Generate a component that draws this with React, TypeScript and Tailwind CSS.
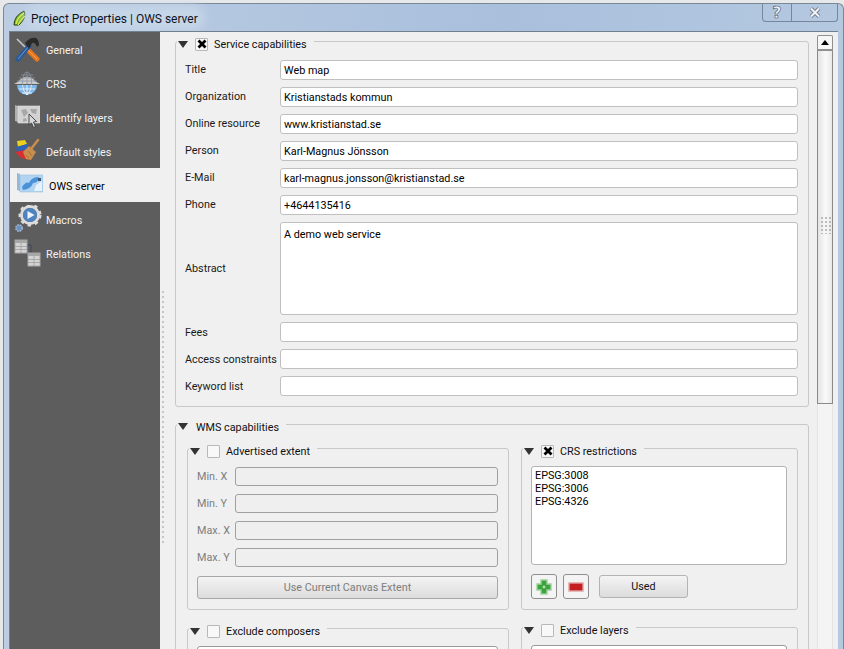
import React from "react";

const font = { fontFamily: 'Roboto, "Noto Sans", sans-serif' };

function Hammer() {
  return (
    <svg width="26" height="26" viewBox="0 0 26 26">
      <path d="M3 3 L13 13" stroke="#c4c8cc" strokeWidth="1.6" />
      <path d="M13 13 L23 23" stroke="#e8761a" strokeWidth="5" strokeLinecap="round" />
      <path d="M13 13 L23 23" stroke="#f4a060" strokeWidth="1" />
      <path d="M4 23 L15 10" stroke="#2a5a98" strokeWidth="5" strokeLinecap="round" />
      <path d="M4 23 L15 10" stroke="#6a98d0" strokeWidth="1" />
      <path d="M11 7 Q16 1 22 2 Q25 4 25 9 L23 11 Q21 6 18 7 L15 13 Z" fill="#2a2a2a" />
    </svg>
  );
}
function Globe() {
  return (
    <svg width="26" height="26" viewBox="0 0 26 26">
      <path d="M0 14 Q4 12 5 11 A9.5 9 0 0 1 21 11 Q22 12 26 14 Z" fill="#c8cacc" />
      <path d="M3 15 A10 10 0 0 0 23 15 Z" fill="#7db8ec" />
      <g stroke="#8a949e" strokeWidth="0.8" fill="none">
        <ellipse cx="13" cy="12" rx="4.5" ry="10" />
        <path d="M13 2 V14 M7 5 H19 M5 8 H21 M3 11 H23" />
      </g>
      <g stroke="#eaf4fc" strokeWidth="0.9" fill="none">
        <path d="M13 15 V25 M5 19 H21 M8 23 H18" />
        <path d="M8.5 15 Q9 21 13 25 Q17 21 17.5 15" />
      </g>
    </svg>
  );
}
function IdMap() {
  return (
    <svg width="26" height="26" viewBox="0 0 26 26">
      <path d="M1 1 L4 2 V18 L1 17 Z" fill="#b0b0b0" />
      <rect x="4" y="2" width="22" height="17" fill="#d2d2d2" stroke="#e0e0e0" strokeWidth="0.6" />
      <path d="M7 6 L12 5 L14 9 L10 13 Z M16 5 L23 5 L22 10 L18 9 Z M9 15 L12 14 L13 17 L9 18 Z" fill="#a8a8a8" />
      <path d="M15 10 L15 21 L17.5 19 L19.5 23.5 L21.5 22.5 L19.5 18 L22.5 17.5 Z" fill="#d8d8d8" stroke="#3c3c3c" strokeWidth="0.9" />
    </svg>
  );
}
function Brush() {
  return (
    <svg width="26" height="26" viewBox="0 0 26 26">
      <path d="M3 3 L11 2 L13 6 L4 9 Z" fill="#ecd020" />
      <path d="M2 9 L13 6 L13 12 L3 14 Z" fill="#2f62b4" />
      <path d="M1 14 L11 12 L16 22 L7 20 Z" fill="#d83030" />
      <path d="M9 14 L15 8 L22 14 L17 22 L12 21 Z" fill="#c98d4e" />
      <path d="M12 17 L15 20 M14 13 L18 18" stroke="#a06a30" strokeWidth="0.8" />
      <path d="M17 11 L24 2" stroke="#c98d4e" strokeWidth="2.5" strokeLinecap="round" />
    </svg>
  );
}
function OwsMap() {
  return (
    <svg width="26" height="26" viewBox="0 0 26 26">
      <path d="M0 1 L3 2 V19 L0 18 Z" fill="#94b8d8" />
      <rect x="3" y="3" width="23" height="17" fill="#b0d4f2" stroke="#9cc0dc" strokeWidth="0.6" />
      <path d="M5 15 Q9 9 12 11 Q14 6 20 5 L23 6 Q20 11 16 11 Q14 17 6 18 Z" fill="#4a92d8" />
      <path d="M19 13 L25 9 V19 H17 Z" fill="#e8f0f8" />
      <rect x="21" y="6" width="3" height="3" fill="#3a5a7c" />
    </svg>
  );
}
function Gear() {
  return (
    <svg width="28" height="28" viewBox="0 0 28 28">
      <g transform="translate(16 10)">
        <circle r="8.5" fill="none" stroke="#dcdcdc" strokeWidth="3" />
        <circle r="10" fill="none" stroke="#dcdcdc" strokeWidth="3" strokeDasharray="3.4 3.9" />
        <circle r="7" fill="#4d84c0" />
        <path d="M-2.5 -4 L4.5 0 L-2.5 4 Z" fill="#eef4fa" />
      </g>
      <circle cx="5" cy="23" r="3.2" fill="#6b92bf" stroke="#9fb6cf" strokeWidth="1.6" strokeDasharray="1.6 1" />
    </svg>
  );
}
function Tables() {
  const t = (x: number, y: number) => (
    <g>
      <rect x={x} y={y} width="12" height="13" fill="#d4d4d4" stroke="#a8a8a8" />
      <rect x={x} y={y} width="12" height="3" fill="#a8a8a8" />
      <path d={`M${x} ${y + 6.5} H${x + 12} M${x} ${y + 9.5} H${x + 12} M${x + 6} ${y + 3} V${y + 13}`} stroke="#a0a0a0" strokeWidth="0.8" />
    </g>
  );
  return (
    <svg width="28" height="28" viewBox="0 0 28 28">
      <path d="M13 6 H17 V14" fill="none" stroke="#3c4a5c" />
      {t(1, 1)}
      {t(14, 14)}
    </svg>
  );
}
function Tri() {
  return (
    <svg width="10" height="7" viewBox="0 0 10 7" className="shrink-0">
      <path d="M0 0 H10 L5 7 Z" fill="#333" />
    </svg>
  );
}
function Check({ on }: { on?: boolean }) {
  return (
    <span className="ml-[7px] mr-[6px] w-[13px] h-[13px] shrink-0 flex items-center justify-center border border-[#b8b8b8] bg-[#f8f8f8] rounded-[1px]">
      {on && (
        <svg width="10" height="10" viewBox="0 0 10 10">
          <path d="M1.5 1.5 L8.5 8.5 M8.5 1.5 L1.5 8.5" stroke="#000" strokeWidth="2.8" />
        </svg>
      )}
    </span>
  );
}

function Field({ label, value, tall, low }: { label: string; value?: string; tall?: boolean; low?: boolean }) {
  return (
    <div className="flex items-center mb-[7px]">
      <span className={`w-[95px] shrink-0 text-[#1a1a1a] whitespace-nowrap ${low ? "pt-[2px]" : ""}`}>{label}</span>
      <div className={`w-[518px] bg-white border border-[#c0c0c0] rounded-[3px] px-[3px] flex text-black ${tall ? "h-[93px] items-start pt-[7px]" : "h-5 items-center pt-[2px]"}`}>
        {value}
      </div>
    </div>
  );
}
function Disabled({ label }: { label: string }) {
  return (
    <div className="flex items-center mb-[8px]">
      <span className="w-[38px] shrink-0 text-[#7d7d7d] pt-[1px]">{label}</span>
      <div className="w-[263px] h-[19px] bg-[#efefef] border border-[#a0a0a0] rounded-[3px]" />
    </div>
  );
}
function Head({ on, check = true, text }: { on?: boolean; check?: boolean; text: string }) {
  return (
    <div className="flex items-center h-[14px] -mt-[5px] pl-[1px]">
      <span className="flex items-center bg-[#f0f0f0] pl-px pr-[7px]">
        <Tri />
        {check ? <Check on={on} /> : <span className="w-[8px]" />}
        <span className="pt-[2px]">{text}</span>
      </span>
    </div>
  );
}

const nav: [string, React.ReactNode][] = [
  ["General", <Hammer />],
  ["CRS", <Globe />],
  ["Identify layers", <IdMap />],
  ["Default styles", <Brush />],
  ["OWS server", <OwsMap />],
  ["Macros", <Gear />],
  ["Relations", <Tables />],
];

export default function App() {
  return (
    <div style={font} className="w-[844px] h-[649px] overflow-hidden bg-[#e6e8ea] text-[10.8px] leading-none text-[#111] pl-[3px] pt-[3px]">
      <div className="w-[841px] h-[646px] rounded-t-[6px] border border-[#7a8794] border-b-0 bg-[linear-gradient(90deg,#bccde3,#a9bfdc_60%,#b4c8e0)] flex flex-col">
        <div className="h-[27px] shrink-0 flex items-start pl-[8px]">
          <div className="flex items-center h-[26px] pt-[1px] gap-[3px]">
            <svg width="16" height="16" viewBox="0 0 16 16">
              <path d="M2 15 Q2 6 12 1 Q15 8 7 15 Z" fill="#7ab832" stroke="#24400c" strokeWidth="1" />
              <path d="M4 14 Q5 8 12 3 M6 15 Q8 10 13 6" stroke="#e4ee48" strokeWidth="1.2" fill="none" />
            </svg>
            <span className="text-[12px] pt-[2px] text-[#10131c] bg-[#c6d6e9] shadow-[0_0_10px_6px_#c6d6e9] rounded-[6px]">Project Properties | OWS server</span>
          </div>
          <div className="ml-auto mr-[5px] flex h-[18px] border border-t-0 border-[#76879c] rounded-b-[4px]">
            <div className="w-[29px] flex items-center justify-center border-r border-[#76879c] text-[#f2f5f9] font-bold text-[16px]" style={{ fontFamily: '"DejaVu Sans", sans-serif', WebkitTextStroke: "0.6px #4a5568" }}>?</div>
            <div className="w-[45px] flex items-center justify-center">
              <svg width="12" height="11" viewBox="0 0 12 11">
                <path d="M2 1.5 L10 9.5 M10 1.5 L2 9.5" stroke="#55606e" strokeWidth="3.6" />
                <path d="M2 1.5 L10 9.5 M10 1.5 L2 9.5" stroke="#f2f4f7" strokeWidth="2.2" />
              </svg>
            </div>
          </div>
        </div>
        <div className="flex-1 min-h-0 flex ml-[5px] mr-[5px] border-l border-t border-[#70808f] bg-[#f0f0f0]">
          <aside className="w-[150px] shrink-0 bg-[#5d5d5d]">
            {nav.map(([n, ic]) => {
              const sel = n === "OWS server";
              return (
                <div key={n} className={`h-[34px] flex items-center ${sel ? "bg-[#f0f0f0] text-black pl-[7px]" : "text-[#f2f2f2] pl-[4px]"}`}>
                  <span className="w-[32px] shrink-0 flex items-center justify-start">{ic}</span>
                  <span className="pt-[4px]">{n}</span>
                </div>
              );
            })}
          </aside>
          <div className="flex-1 min-w-0 flex">
            <div className="w-[15px] shrink-0 pl-[2px] pt-[259px]">
              <div className="w-[2px] h-[254px] bg-[linear-gradient(#c6c6c6_2px,transparent_2px)] bg-[length:2px_5px]" />
            </div>
            <main className="w-[642px] shrink-0 overflow-hidden pt-[9px]">
              <section className="w-[634px] h-[366px] border border-[#c8c8c8] rounded-[3px]">
                <Head on text="Service capabilities" />
                <div className="pl-[9px] pt-[9px]">
                  <Field label="Title" value="Web map" />
                  <Field label="Organization" value="Kristianstads kommun" />
                  <Field label="Online resource" value="www.kristianstad.se" />
                  <Field label="Person" value="Karl-Magnus Jönsson" />
                  <Field label="E-Mail" value="karl-magnus.jonsson@kristianstad.se" />
                  <Field label="Phone" value="+4644135416" />
                  <Field label="Abstract" value="A demo web service" tall low />
                  <Field label="Fees" low />
                  <Field label="Access constraints" low />
                  <Field label="Keyword list" low />
                </div>
              </section>
              <section className="w-[634px] h-[400px] mt-[17px] border border-[#c8c8c8] rounded-[3px]">
                <Head text="WMS capabilities" check={false} />
                <div className="flex pl-[11px] pt-[14px] gap-[12px]">
                  <div className="w-[322px] shrink-0">
                    <div className="h-[162px] border border-[#c8c8c8] rounded-[3px]">
                      <Head text="Advertised extent" />
                      <div className="pl-[9px] pt-[9px]">
                        <Disabled label="Min. X" />
                        <Disabled label="Min. Y" />
                        <Disabled label="Max. X" />
                        <Disabled label="Max. Y" />
                        <button className="mt-[1px] pt-[2px] w-[301px] h-[23px] border border-[#a8a8a8] rounded-[3px] bg-[linear-gradient(#f4f4f4,#dcdcdc)] text-[#7d7d7d]">Use Current Canvas Extent</button>
                      </div>
                    </div>
                    <div className="h-[60px] mt-[18px] border border-[#c8c8c8] rounded-[3px]">
                      <Head text="Exclude composers" />
                      <div className="ml-[9px] mt-[8px] w-[301px] h-[30px] bg-white border border-[#9a9a9a] rounded-[3px]" />
                    </div>
                  </div>
                  <div className="w-[277px] shrink-0">
                    <div className="h-[162px] border border-[#c8c8c8] rounded-[3px]">
                      <Head on text="CRS restrictions" />
                      <div className="pl-[9px] pt-[8px]">
                        <div className="w-[256px] h-[99px] bg-white border border-[#b4b4b4] rounded-[3px] px-[3px] pt-[2px] leading-[13px] text-black">
                          <div>EPSG:3008</div>
                          <div>EPSG:3006</div>
                          <div>EPSG:4326</div>
                        </div>
                        <div className="flex items-center mt-[9px]">
                          <div className="w-[26px] h-[25px] border border-[#8e8e8e] rounded-[3px] bg-[#f4f4f4] flex items-center justify-center">
                            <svg width="16" height="16" viewBox="0 0 16 16">
                              <path d="M5 1 H11 V5 H15 V11 H11 V15 H5 V11 H1 V5 H5 Z" fill="#3aa33a" stroke="#9fd09f" strokeWidth="1.4" />
                              <path d="M6.5 8 H9.5 M8 6.5 V9.5" stroke="#d8f0d8" strokeWidth="1" />
                            </svg>
                          </div>
                          <div className="w-[26px] h-[25px] ml-[6px] border border-[#8e8e8e] rounded-[3px] bg-[#f4f4f4] flex items-center justify-center">
                            <svg width="16" height="10" viewBox="0 0 16 10">
                              <rect x="1" y="1" width="14" height="8" fill="#c42020" stroke="#e0a0a0" strokeWidth="1.4" />
                            </svg>
                          </div>
                          <button className="ml-[10px] pt-[2px] w-[89px] h-[23px] border border-[#b4b4b4] rounded-[3px] bg-[linear-gradient(#f4f4f4,#dcdcdc)] text-[#111]">Used</button>
                        </div>
                      </div>
                    </div>
                    <div className="h-[60px] mt-[17px] border border-[#c8c8c8] rounded-[3px]">
                      <Head text="Exclude layers" />
                      <div className="ml-[9px] mt-[8px] w-[256px] h-[30px] bg-white border border-[#9a9a9a] rounded-[3px]" />
                    </div>
                  </div>
                </div>
              </section>
            </main>
            <div className="flex-1 min-w-0 pt-[3px] flex flex-col items-start">
              <div className="w-[16px] flex-1 flex flex-col bg-[#f4f4f4] bg-[radial-gradient(#cfcfcf_0.5px,transparent_0.6px)] bg-[length:2px_2px] border-x border-[#e4e4e4]">
                <div className="h-[16px] -mx-px border border-[#909090] border-b-2 rounded-t-[2px] bg-[#f6f6f6] flex items-center justify-center">
                  <svg width="8" height="5" viewBox="0 0 8 5"><path d="M0 5 L4 0 L8 5 Z" fill="#000" /></svg>
                </div>
                <div className="h-[353px] -mx-px border-x border-b border-[#8a8a8a] bg-[linear-gradient(90deg,#e4e4e4,#fafafa_55%,#e8e8e8)] flex items-center justify-center">
                  <div className="w-[11px] h-[18px] -mt-[5px] bg-[radial-gradient(#bcbcbc_1px,transparent_1.1px)] bg-[length:4px_4px]" />
                </div>
              </div>
            </div>
          </div>
        </div>
      </div>
    </div>
  );
}
